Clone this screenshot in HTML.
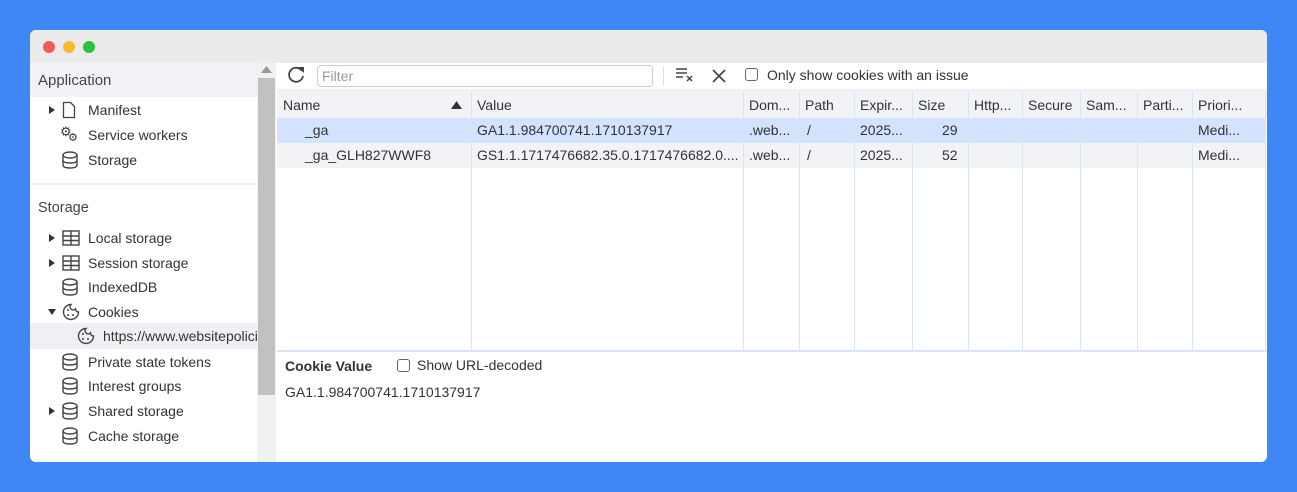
<!DOCTYPE html>
<html><head><meta charset="utf-8"><style>
*{margin:0;padding:0;box-sizing:border-box}
body{width:1297px;height:492px;background:#3f87f5;font-family:"Liberation Sans",sans-serif;color:#333;position:relative;overflow:hidden}
.win{position:absolute;left:30px;top:30px;width:1237px;height:432px;background:#fff;border-radius:6px;overflow:hidden}
.title{position:absolute;left:0;top:0;width:100%;height:33px;background:#ebebeb}
.dot{position:absolute;top:11px;width:12px;height:12px;border-radius:50%}
.side{position:absolute;left:0;top:33px;width:227px;height:399px;background:#fff;overflow:hidden}
.t{position:absolute;font-size:14px;color:#333;white-space:nowrap}
.h{position:absolute;font-size:14px;color:#444}
.ic{position:absolute}
.sb{position:absolute;left:227px;top:33px;width:19px;height:399px;background:#f1f1f1}
.main{position:absolute;left:247px;top:33px;width:990px;height:399px}
.col{position:absolute;top:29px;height:258px;border-left:1px solid #dde4ef}
.ht{position:absolute;top:34px;font-size:14px;color:#333;white-space:nowrap}
.c{position:absolute;font-size:14px;color:#333;white-space:nowrap}
.cb{position:absolute;width:13px;height:13px;border:1px solid #666;border-radius:3px;background:#fff}
</style></head><body>
<div class="win">
<div class="title">
<div class="dot" style="left:13px;background:#f25b55"></div>
<div class="dot" style="left:33px;background:#f8bb2f"></div>
<div class="dot" style="left:53px;background:#2cc140"></div>
</div>
<div class="side">
<div style="position:absolute;left:0;top:0;width:227px;height:34px;background:#f0f2f5"></div>
<div class="h" style="left:8px;top:9px;font-size:15px">Application</div>
<svg class="ic" style="left:18px;top:42px" width="8" height="10"><path d="M1 1L7 5L1 9Z" fill="#333"/></svg>
<svg class="ic" style="left:32px;top:38px" width="14" height="18"><path d="M1.5 1.5h7l4 4v11h-11z" fill="none" stroke="#444" stroke-width="1.3"/></svg>
<div class="t" style="left:58px;top:39px">Manifest</div>
<div class="t" style="left:30px;top:61px;font-size:13px">⚙</div><div class="t" style="left:38px;top:68px;font-size:11px">⚙</div>
<div class="t" style="left:58px;top:64px">Service workers</div>
<svg class="ic" style="left:32px;top:88px" width="18" height="18"><g fill="none" stroke="#444" stroke-width="1.4"><ellipse cx="8" cy="4" rx="7" ry="3"/><path d="M1 4v10c0 2 3 3 7 3s7-1 7-3V4M1 9c0 2 3 3 7 3s7-1 7-3"/></g></svg>
<div class="t" style="left:58px;top:89px">Storage</div>
<div style="position:absolute;left:0;top:120px;width:227px;height:2px;background:#eef0f3"></div>
<div class="h" style="left:8px;top:137px;font-size:14.5px">Storage</div>
<div style="position:absolute;left:0;top:260px;width:227px;height:26px;background:#eef0f3"></div>
<div id="items"></div>
</div>
<div class="sb"><svg style="position:absolute;left:4px;top:3px" width="11" height="7"><path d="M0 7L5.5 0L11 7Z" fill="#999"/></svg><div style="position:absolute;left:1px;top:15px;width:17px;height:317px;background:#c1c1c1"></div></div>
<div class="main">
<div style="position:absolute;left:0;top:0;width:990px;height:26px;background:#fff"></div>
<svg class="ic" style="left:10px;top:2px" width="20" height="20"><path d="M15 6A7 7 0 1 0 16 11" fill="none" stroke="#444" stroke-width="1.8"/><path d="M11 2h6v6z" fill="#444"/></svg>
<div style="position:absolute;left:40px;top:2px;width:336px;height:22px;border:1px solid #ccc;border-radius:4px;font-size:14px;color:#999;padding:2px 4px">Filter</div>
<div style="position:absolute;left:386px;top:4px;width:1px;height:18px;background:#ddd"></div>
<svg class="ic" style="left:398px;top:3px" width="20" height="18"><g stroke="#444" stroke-width="1.5"><path d="M1 3h11M1 7h11M1 11h7M12 10l5 5M17 10l-5 5"/></g></svg>
<svg class="ic" style="left:435px;top:6px" width="14" height="14"><path d="M1 1L13 13M13 1L1 13" stroke="#444" stroke-width="1.7"/></svg>
<div class="cb" style="left:468px;top:5px"></div>
<div class="c" style="left:490px;top:4px">Only show cookies with an issue</div>
<div style="position:absolute;left:0;top:26px;width:990px;height:3px;background:#eef1f5"></div>
<div style="position:absolute;left:0;top:29px;width:990px;height:26px;background:#f1f3f6"></div>
<div style="position:absolute;left:0;top:55px;width:988px;height:25px;background:#d3e3fd"></div>
<div style="position:absolute;left:0;top:80px;width:988px;height:25px;background:#f1f3f6"></div>
<div class="col" style="left:194px"></div><div class="col" style="left:466px"></div><div class="col" style="left:522px"></div><div class="col" style="left:577px"></div><div class="col" style="left:635px"></div><div class="col" style="left:691px"></div><div class="col" style="left:745px"></div><div class="col" style="left:803px"></div><div class="col" style="left:860px"></div><div class="col" style="left:915px"></div><div class="col" style="left:988px"></div>
<div class="ht" style="left:6px">Name</div>
<svg class="ic" style="left:174px;top:38px" width="11" height="8"><path d="M0 8L5.5 0L11 8Z" fill="#333"/></svg>
<div class="ht" style="left:200px">Value</div><div class="ht" style="left:472px">Dom...</div><div class="ht" style="left:528px">Path</div><div class="ht" style="left:583px">Expir...</div><div class="ht" style="left:641px">Size</div><div class="ht" style="left:697px">Http...</div><div class="ht" style="left:751px">Secure</div><div class="ht" style="left:809px">Sam...</div><div class="ht" style="left:866px">Parti...</div><div class="ht" style="left:921px">Priori...</div>
<div class="c" style="left:28px;top:59px">_ga</div><div class="c" style="left:200px;top:59px">GA1.1.984700741.1710137917</div><div class="c" style="left:472px;top:59px">.web...</div><div class="c" style="left:530px;top:59px">/</div><div class="c" style="left:583px;top:59px">2025...</div><div class="c" style="left:665px;top:59px">29</div><div class="c" style="left:921px;top:59px">Medi...</div>
<div class="c" style="left:28px;top:84px">_ga_GLH827WWF8</div><div class="c" style="left:200px;top:84px;width:262px;overflow:hidden">GS1.1.1717476682.35.0.1717476682.0....</div><div class="c" style="left:472px;top:84px">.web...</div><div class="c" style="left:530px;top:84px">/</div><div class="c" style="left:583px;top:84px">2025...</div><div class="c" style="left:665px;top:84px">52</div><div class="c" style="left:921px;top:84px">Medi...</div>
<div style="position:absolute;left:0;top:287px;width:990px;height:2px;background:#d7e3f7"></div>
<div class="c" style="left:8px;top:295px;font-weight:bold;color:#333">Cookie Value</div>
<div class="cb" style="left:120px;top:296px"></div>
<div class="c" style="left:140px;top:294px">Show URL-decoded</div>
<div class="c" style="left:8px;top:321px">GA1.1.984700741.1710137917</div>
</div>
</div>
<script>
var db='<svg width="18" height="18"><g fill="none" stroke="#444" stroke-width="1.4"><ellipse cx="8" cy="4" rx="7" ry="3"/><path d="M1 4v10c0 2 3 3 7 3s7-1 7-3V4M1 9c0 2 3 3 7 3s7-1 7-3"/></g></svg>';
var grid='<svg width="18" height="18"><g fill="none" stroke="#444" stroke-width="1.4"><rect x="1" y="2" width="16" height="14"/><path d="M1 7h16M1 11.5h16M9 2v14"/></g></svg>';
var ck='<svg width="18" height="18"><g fill="none" stroke="#444" stroke-width="1.4"><path d="M9 1.5a7.5 7.5 0 1 0 7.5 7.5 3 3 0 0 1-3-3 3 3 0 0 1-4.5-4.5z"/></g><g fill="#444"><circle cx="6" cy="7" r="1"/><circle cx="11" cy="12" r="1"/><circle cx="6" cy="12" r="1"/></g></svg>';
var it=[[238,1,grid,'Local storage',58],[263,1,grid,'Session storage',58],[287,0,db,'IndexedDB',58],[312,2,ck,'Cookies',58],[336,0,ck,'https://www.websitepolicies.com',73],[362,0,db,'Private state tokens',58],[386,0,db,'Interest groups',58],[411,1,db,'Shared storage',58],[436,0,db,'Cache storage',58]];
var h='';it.forEach(function(a){var y=a[0]-71;
if(a[1]==1)h+='<svg class="ic" style="left:18px;top:'+(y+3)+'px" width="8" height="10"><path d="M1 1L7 5L1 9Z" fill="#333"/></svg>';
if(a[1]==2)h+='<svg class="ic" style="left:17px;top:'+(y+4)+'px" width="10" height="8"><path d="M1 1L9 1L5 7Z" fill="#333"/></svg>';
h+='<div class="ic" style="left:'+(a[4]-26)+'px;top:'+(y-1)+'px">'+a[2]+'</div><div class="t" style="left:'+a[4]+'px;top:'+y+'px;'+(a[4]==73?'width:154px;overflow:hidden':'')+'">'+a[3]+'</div>';});
document.getElementById('items').outerHTML=h;
</script>
</body></html>
